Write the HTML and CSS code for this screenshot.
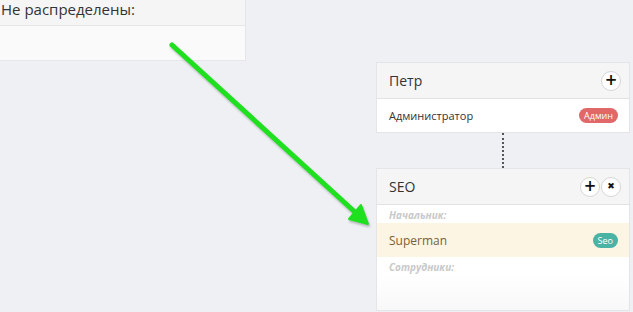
FILE: index.html
```html
<!DOCTYPE html>
<html>
<head>
  <meta charset="UTF-8">
  <title>Структура</title>
  <link rel="stylesheet" href="styles.css">
</head>
<body>
  <div class="board">
    <div class="unassigned">
      <div class="panel-head">Не распределены:</div>
      <div class="panel-body"></div>
    </div>

    <div class="tree">
      <div class="node">
        <div class="node-head">
          <span class="node-title">Петр</span>
          <span class="node-tools">
            <span class="tool">+</span>
          </span>
        </div>
        <div class="node-row">
          <span>Администратор</span>
          <span class="badge badge-red">Админ</span>
        </div>
      </div>

      <div class="link"></div>

      <div class="node">
        <div class="node-head">
          <span class="node-title">SEO</span>
          <span class="node-tools">
            <span class="tool">+</span>
            <span class="tool tool-x">&#x2716;</span>
          </span>
        </div>
        <div class="node-label">Начальник:</div>
        <div class="node-row chief">
          <span>Superman</span>
          <span class="badge badge-teal">Seo</span>
        </div>
        <div class="node-label">Сотрудники:</div>
        <div class="node-empty"></div>
      </div>
    </div>

    <svg class="arrow" width="633" height="312" viewBox="0 0 633 312">
      <line x1="172" y1="45" x2="356" y2="213" stroke="#1fe01f" stroke-width="5" stroke-linecap="round"/>
      <polygon points="368,224 349,219 361,205" fill="#1fe01f" stroke="#1fe01f" stroke-width="2" stroke-linejoin="round"/>
    </svg>
  </div>
</body>
</html>
```

FILE: styles.css
```css
body {
  margin: 0;
  background: #eef0f4;
  font-family: "Open Sans", "Liberation Sans", sans-serif;
  color: #333;
  overflow: hidden;
}
.board {
  position: relative;
  display: flex;
  align-items: flex-start;
  height: 312px;
}
.unassigned {
  width: 258px;
  margin-left: -14px;
  background: #fafafa;
  border: 1px solid #e4e6ea;
  border-top: none;
}
.panel-head {
  height: 25px;
  padding: 0 14px;
  background: #f5f5f5;
  border-bottom: 1px solid #e6e6e6;
  font-size: 15px;
  line-height: 18px;
}
.panel-body {
  height: 34px;
}
.tree {
  display: flex;
  flex-direction: column;
  align-items: center;
  width: 254px;
  margin: 62px 3px 0 auto;
}
.node {
  width: 252px;
  background: #fff;
  border: 1px solid #e3e5e8;
}
.node-head {
  display: flex;
  align-items: center;
  justify-content: space-between;
  height: 35px;
  padding: 0 8px 0 12px;
  background: #f5f5f5;
  border-bottom: 1px solid #e2e2e2;
}
.node-title {
  font-size: 14px;
  color: #333;
}
.node-tools {
  display: flex;
  gap: 1px;
}
.tool {
  display: flex;
  align-items: center;
  justify-content: center;
  width: 18px;
  height: 18px;
  border: 1px solid #d6d6d6;
  border-radius: 50%;
  background: #fff;
  font-family: "DejaVu Sans", sans-serif;
  font-size: 15px;
  font-weight: bold;
  color: #111;
  line-height: 1;
}
.tool-x {
  font-size: 9px;
}
.node-row {
  display: flex;
  align-items: center;
  justify-content: space-between;
  height: 33px;
  padding: 0 11px 0 12px;
  font-size: 11px;
  color: #333;
}
.chief {
  height: 34px;
  background: #fcf5e3;
  color: #7a5f35;
  font-size: 12px;
}
.badge {
  padding: 1px 5px;
  border-radius: 8px;
  font-size: 9px;
  color: #fff;
  line-height: 13px;
}
.badge-red {
  background: #e06868;
}
.badge-teal {
  background: #4bb3a3;
}
.node-label {
  height: 18px;
  padding: 0 12px;
  font-size: 10px;
  font-style: italic;
  font-weight: bold;
  color: #c9c9c9;
  line-height: 20px;
}
.node-empty {
  height: 35px;
  background: linear-gradient(#fff, #f8f8f8);
}
.link {
  width: 0;
  height: 35px;
  border-left: 2px dotted #555;
}
.arrow {
  position: absolute;
  left: 0;
  top: 0;
  filter: drop-shadow(1px 2px 1px rgba(0, 0, 0, 0.25));
}
```
